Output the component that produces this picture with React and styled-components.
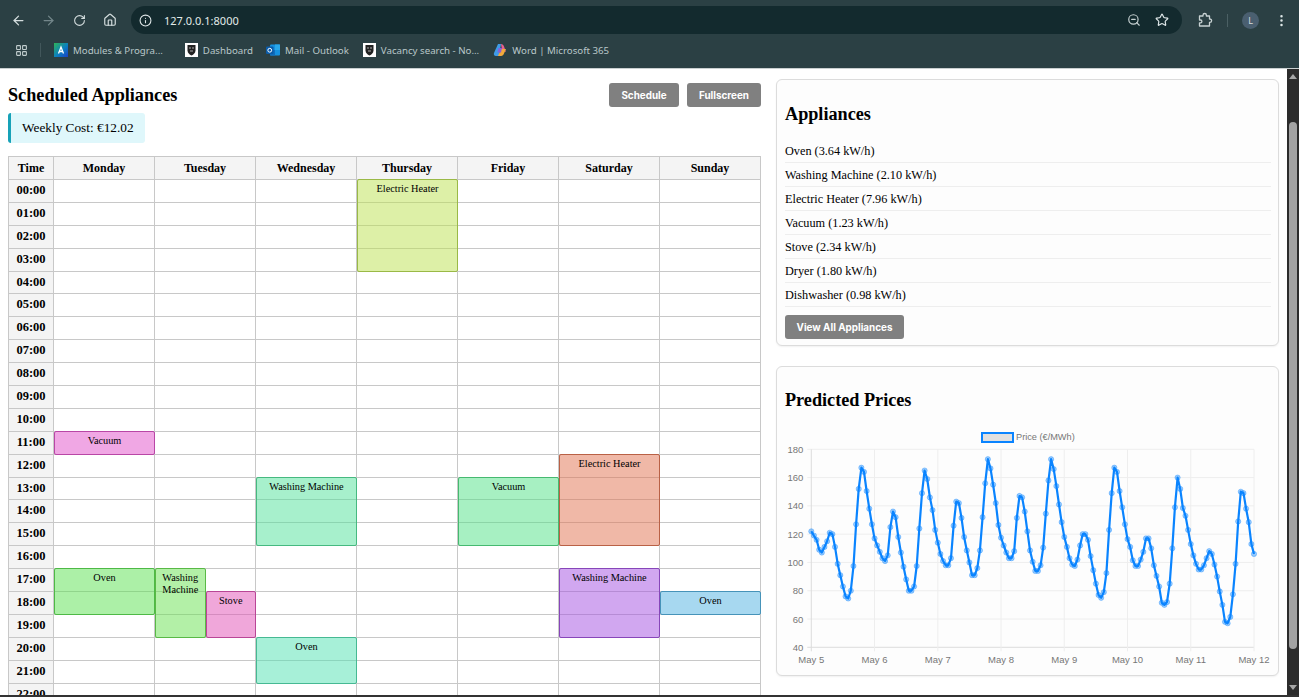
import React from 'react';
import styled, { createGlobalStyle } from 'styled-components';
import { ArrowLeft, ArrowRight, RotateCw, Home, Info, ZoomOut, Star, MoreVertical, LayoutGrid } from 'lucide-react';

const GlobalStyle = createGlobalStyle`
  html, body {
    margin: 0;
    padding: 0;
    height: 100%;
    overflow: hidden;
    background: #fff;
  }
  * {
    box-sizing: border-box;
  }
`;

const days = ['Monday', 'Tuesday', 'Wednesday', 'Thursday', 'Friday', 'Saturday', 'Sunday'];
const hours = Array.from({ length: 24 }, (_, i) => `${String(i).padStart(2, '0')}:00`);

// day is 0-based from Monday, half: 1 = left half of the column, 2 = right half
const events = [
  { name: 'Electric Heater', day: 3, start: 0, span: 4, hue: 76 },
  { name: 'Vacuum', day: 0, start: 11, span: 1, hue: 310 },
  { name: 'Electric Heater', day: 5, start: 12, span: 4, hue: 14 },
  { name: 'Washing Machine', day: 2, start: 13, span: 3, hue: 150 },
  { name: 'Vacuum', day: 4, start: 13, span: 3, hue: 142 },
  { name: 'Oven', day: 0, start: 17, span: 2, hue: 116 },
  { name: 'Washing Machine', day: 1, start: 17, span: 3, hue: 110, half: 1 },
  { name: 'Stove', day: 1, start: 18, span: 2, hue: 318, half: 2 },
  { name: 'Oven', day: 2, start: 20, span: 2, hue: 160 },
  { name: 'Washing Machine', day: 5, start: 17, span: 3, hue: 274 },
  { name: 'Oven', day: 6, start: 18, span: 1, hue: 200 },
];

const appliances = [
  'Oven (3.64 kW/h)',
  'Washing Machine (2.10 kW/h)',
  'Electric Heater (7.96 kW/h)',
  'Vacuum (1.23 kW/h)',
  'Stove (2.34 kW/h)',
  'Dryer (1.80 kW/h)',
  'Dishwasher (0.98 kW/h)',
];

const prices = [
  122, 119, 116, 109, 107, 111, 115, 121, 120, 111, 99, 91, 83, 76, 74.5, 80, 97.5, 127, 152, 167, 164, 150.5, 138, 127,
  117, 112, 107.5, 103, 101, 105, 125, 136, 132, 118, 107, 97, 88, 80, 80, 83, 97.5, 124, 149, 165, 159, 146, 137, 123,
  114, 106, 101, 98, 98, 103, 126, 143, 142, 131.5, 118, 108.5, 100, 91, 91, 96, 108.5, 132, 156, 173, 166.5, 155, 142, 126.5,
  117.5, 112, 107, 103, 103, 108, 131.5, 147, 146, 136, 122, 108.5, 100.5, 94, 94, 98, 110.5, 134.5, 158, 173, 166, 154, 141, 128.5,
  118, 111, 103, 98.5, 97.5, 102, 112, 120, 120, 116, 104.5, 94.5, 85, 77, 75, 79, 92.5, 123, 149, 167, 164, 150.5, 139, 127,
  116.5, 111, 101.5, 97.5, 97.5, 102, 107.5, 117, 117, 110, 98, 90.5, 83, 71.5, 70, 72, 85, 110, 139, 160, 152, 138.5, 133, 123,
  113, 105, 99, 95, 95, 98, 103, 108, 106, 98.5, 90, 79.5, 70, 58, 57, 61.5, 77.5, 99, 129, 150, 149, 138, 128.5, 113, 106,
];

const CHART = { left: 26.3, right: 469, top: 24.3, bottom: 222.3 };
const xAt = (hour) => CHART.left + (hour / 168) * (CHART.right - CHART.left);
const yAt = (value) => CHART.bottom - ((value - 40) / 140) * (CHART.bottom - CHART.top);

const yTicks = [40, 60, 80, 100, 120, 140, 160, 180];
const xTicks = ['May 5', 'May 6', 'May 7', 'May 8', 'May 9', 'May 10', 'May 11', 'May 12'];

const PriceChart = () => (
  <ChartSvg viewBox="0 0 487 252">
    <LegendBox x="197" y="8" width="31" height="9" />
    <LegendText x="231" y="15">Price (€/MWh)</LegendText>

    {yTicks.map((tick) => (
      <g key={tick}>
        <GridLine x1={CHART.left - 4} x2={CHART.right} y1={yAt(tick)} y2={yAt(tick)} $axis={tick === 40} />
        <TickText x={CHART.left - 8} y={yAt(tick) + 3.5} textAnchor="end">{tick}</TickText>
      </g>
    ))}
    {xTicks.map((tick, i) => (
      <g key={tick}>
        <GridLine x1={xAt(i * 24)} x2={xAt(i * 24)} y1={CHART.top} y2={CHART.bottom + 4} $axis={i === 0} />
        <TickText x={xAt(i * 24)} y={CHART.bottom + 16} textAnchor="middle">{tick}</TickText>
      </g>
    ))}

    <PriceLine points={prices.map((p, i) => `${xAt(i).toFixed(1)},${yAt(p).toFixed(1)}`).join(' ')} />
    {prices.map((p, i) => (
      <PricePoint key={i} cx={xAt(i)} cy={yAt(p)} r="2.6" />
    ))}
  </ChartSvg>
);

const ExtensionIcon = () => (
  <svg width="16" height="16" viewBox="0 0 16 16" fill="none" stroke="#c8d2d3" strokeWidth="1.300" strokeLinejoin="round">
    <path d="M2.500 4H6V3.200a1.700 1.700 0 0 1 3.400 0V4h3.100v3h.4a1.700 1.700 0 0 1 0 3.400h-.4V14h-10v-3.200h1a1.400 1.400 0 0 0 0-2.800h-1z" />
  </svg>
);

const ShieldIcon = () => (
  <svg width="13" height="14" viewBox="0 0 13 14">
    <rect width="13" height="14" fill="#fff" />
    <path d="M2.500 2h8v5.500c0 2.500-2 4-4 5-2-1-4-2.500-4-5z" fill="#222" />
    <path d="M4 5h2M7 5h2M5 8h3" stroke="#aaa" strokeWidth="1" />
  </svg>
);

const ModulesIcon = () => (
  <svg width="14" height="14" viewBox="0 0 14 14">
    <defs>
      <linearGradient id="modGrad" x1="0" y1="0" x2="1" y2="1">
        <stop offset="0" stopColor="#2fb457" />
        <stop offset="0.55" stopColor="#0b7fc0" />
        <stop offset="1" stopColor="#1a3fc4" />
      </linearGradient>
    </defs>
    <rect width="14" height="14" fill="url(#modGrad)" />
    <path d="M4.500 10.500 7 4l2.500 6.500M5.500 8.500h3" stroke="#fff" strokeWidth="1.300" fill="none" />
  </svg>
);

const OutlookIcon = () => (
  <svg width="14" height="14" viewBox="0 0 14 14">
    <rect x="4" y="1.500" width="10" height="11" rx="1" fill="#1490df" />
    <rect x="9" y="1.500" width="5" height="5.500" fill="#28a8ea" />
    <rect x="4" y="7" width="5" height="5.500" fill="#0f6cbd" />
    <rect x="0" y="3.500" width="7.500" height="7.500" rx="1" fill="#0a5ba8" />
    <circle cx="3.750" cy="7.250" r="1.900" fill="none" stroke="#fff" strokeWidth="1" />
  </svg>
);

const CopilotIcon = () => (
  <svg width="14" height="14" viewBox="0 0 14 14">
    <path d="M5 1h3L6 13H3C1 13 .5 11.500 1 10z" fill="#3f9be8" />
    <path d="M8 1c1.500 0 2.500 1 3 2.500L13 9 9 7z" fill="#e8608f" />
    <path d="M5 13h3c1.500 0 2.500-1 3-2.500l2-4.500H8z" fill="#f2a93b" />
    <path d="M5.500 5 9 5 8 9.500H4.500z" fill="#8a5fd8" />
  </svg>
);

const bookmarks = [
  { label: 'Modules & Progra...', icon: <ModulesIcon />, gap: 22 },
  { label: 'Dashboard', icon: <ShieldIcon />, gap: 13 },
  { label: 'Mail - Outlook', icon: <OutlookIcon />, gap: 14 },
  { label: 'Vacancy search - No...', icon: <ShieldIcon />, gap: 14 },
  { label: 'Word | Microsoft 365', icon: <CopilotIcon />, gap: 0 },
];

const App = () => (
  <Page>
    <GlobalStyle />
    <BrowserChrome>
      <TopBar>
        <NavIcon><ArrowLeft size={15} /></NavIcon>
        <NavIcon $dim><ArrowRight size={15} /></NavIcon>
        <NavIcon><RotateCw size={13} /></NavIcon>
        <NavIcon><Home size={14} /></NavIcon>
        <AddressBar>
          <Info size={13} color="#dfe7e8" />
          <AddressText>127.0.0.1:8000</AddressText>
          <AddressActions>
            <ZoomOut size={14} color="#c8d2d3" />
            <Star size={14} color="#dfe7e8" />
          </AddressActions>
        </AddressBar>
        <ToolIcons>
          <ExtensionIcon />
          <ToolDivider />
          <Avatar>L</Avatar>
          <MoreVertical size={15} color="#dfe7e8" />
        </ToolIcons>
      </TopBar>
      <BookmarkBar>
        <LayoutGrid size={13} color="#c0cccd" />
        <BookmarkDivider />
        {bookmarks.map((b) => (
          <Bookmark key={b.label} $gap={b.gap}>
            {b.icon}
            <span>{b.label}</span>
          </Bookmark>
        ))}
      </BookmarkBar>
    </BrowserChrome>

    <Viewport>
      <Content>
        <ScheduleColumn>
          <ScheduleHeader>
            <div>
              <PageTitle>Scheduled Appliances</PageTitle>
              <CostBox>Weekly Cost: €12.02</CostBox>
            </div>
            <HeaderButtons>
              <GreyButton $width={70}>Schedule</GreyButton>
              <GreyButton $width={74}>Fullscreen</GreyButton>
            </HeaderButtons>
          </ScheduleHeader>

          <Calendar>
            <HeadCell $col={1} $row={1}>Time</HeadCell>
            {days.map((d, i) => (
              <HeadCell key={d} $col={i + 2} $row={1}>{d}</HeadCell>
            ))}
            {hours.map((h, r) => (
              <React.Fragment key={h}>
                <TimeCell $col={1} $row={r + 2}>{h}</TimeCell>
                {days.map((d, i) => (
                  <Cell key={d} $col={i + 2} $row={r + 2} />
                ))}
              </React.Fragment>
            ))}
            {events.map((e) => (
              <Event key={`${e.name}-${e.day}-${e.start}`} $day={e.day} $start={e.start} $span={e.span} $hue={e.hue} $half={e.half}>
                {e.name}
              </Event>
            ))}
          </Calendar>
        </ScheduleColumn>

        <SideColumn>
          <Panel $height={267}>
            <PanelTitle $top={22} $height={58.5}>Appliances</PanelTitle>
            <ApplianceList>
              {appliances.map((a) => (
                <ApplianceRow key={a}>{a}</ApplianceRow>
              ))}
            </ApplianceList>
            <GreyButton $width={119}>View All Appliances</GreyButton>
          </Panel>
          <Panel $height={310}>
            <PanelTitle $top={21} $height={59}>Predicted Prices</PanelTitle>
            <PriceChart />
          </Panel>
        </SideColumn>
      </Content>

      <Scrollbar>
        <ScrollArrow />
        <ScrollTrack>
          <ScrollThumb />
        </ScrollTrack>
        <ScrollArrow $down />
      </Scrollbar>
    </Viewport>
  </Page>
);

const Page = styled.div`
  height: 100vh;
  display: flex;
  flex-direction: column;
  overflow: hidden;
  border-bottom: 2px solid #333;
`;

const BrowserChrome = styled.header`
  flex: 0 0 69px;
  background: #2b4044;
  border-bottom: 1px solid #c9cfd0;
  font-family: "Noto Sans", "Open Sans", sans-serif;
`;

const TopBar = styled.div`
  height: 34px;
  padding: 6px 10px 0 3px;
  display: flex;
  align-items: center;
`;

const NavIcon = styled.span`
  flex: 0 0 30.5px;
  display: flex;
  justify-content: center;
  color: ${(p) => (p.$dim ? '#73868a' : '#d5dedf')};
`;

const AddressBar = styled.div`
  flex: 1;
  height: 28px;
  margin-left: 6px;
  padding: 0 13px 0 8px;
  border-radius: 14px;
  background: #132a2e;
  display: flex;
  align-items: center;
  gap: 12px;
`;

const AddressText = styled.span`
  flex: 1;
  font-size: 11px;
  color: #e2eaea;
`;

const AddressActions = styled.span`
  display: flex;
  align-items: center;
  gap: 14px;
`;

const ToolIcons = styled.div`
  flex: 0 0 106px;
  display: flex;
  align-items: center;
  padding-left: 15px;
`;

const ToolDivider = styled.span`
  width: 1px;
  height: 13px;
  margin: 0 14px 0 14px;
  background: #4b6064;
`;

const Avatar = styled.span`
  width: 17px;
  height: 17px;
  margin-right: 15px;
  border-radius: 50%;
  background: #4a5f70;
  color: #d5dedf;
  font-size: 9px;
  line-height: 17px;
  text-align: center;
`;

const BookmarkBar = styled.nav`
  height: 32px;
  padding: 0 0 0 15px;
  display: flex;
  align-items: center;
`;

const BookmarkDivider = styled.span`
  width: 1px;
  height: 14px;
  margin: 0 13px 0 12px;
  background: #42575b;
`;

const Bookmark = styled.span`
  display: flex;
  align-items: center;
  gap: 5px;
  margin-right: ${(p) => p.$gap}px;
  font-size: 9.700px;
  color: #b9c7c9;
  white-space: nowrap;
`;

const Viewport = styled.div`
  flex: 1;
  min-height: 0;
  display: flex;
  background: #fff;
`;

const Content = styled.main`
  flex: 1;
  min-width: 0;
  padding: 10px 8px 0 8px;
  display: grid;
  grid-template-columns: 753px 503px;
  column-gap: 15px;
  align-items: start;
  overflow: hidden;
  font-family: "Liberation Serif", "Times New Roman", serif;
  color: #000;
`;

const ScheduleColumn = styled.section`
  min-width: 0;
`;

const ScheduleHeader = styled.div`
  height: 77px;
  display: flex;
  justify-content: space-between;
  align-items: flex-start;
`;

const PageTitle = styled.h2`
  margin: 4px 0 0;
  height: 30px;
  font-size: 18.200px;
  line-height: 24px;
  font-weight: bold;
`;

const CostBox = styled.div`
  width: 137px;
  height: 30px;
  padding-left: 11px;
  border-left: 3px solid #17a2b8;
  border-radius: 3px;
  background: #dff7fb;
  font-size: 13.300px;
  line-height: 30px;
  white-space: nowrap;
`;

const HeaderButtons = styled.div`
  display: flex;
  gap: 8px;
  margin-top: 4px;
`;

const GreyButton = styled.button`
  display: block;
  width: ${(p) => p.$width}px;
  height: 24px;
  padding: 0;
  border: none;
  border-radius: 3px;
  background: #808080;
  color: #fff;
  font-family: Inter, "Liberation Sans", sans-serif;
  font-size: 9.900px;
  font-weight: 700;
`;

const Calendar = styled.div`
  display: grid;
  grid-template-columns: 45px repeat(7, 1fr);
  grid-template-rows: 23px repeat(24, 22.900px);
  border-top: 1px solid #c8c8c8;
  border-left: 1px solid #c8c8c8;
`;

const Cell = styled.div`
  grid-column: ${(p) => p.$col};
  grid-row: ${(p) => p.$row};
  border-right: 1px solid #c8c8c8;
  border-bottom: 1px solid #c8c8c8;
`;

const HeadCell = styled(Cell)`
  background: #f4f4f4;
  font-size: 12px;
  font-weight: bold;
  line-height: 22px;
  text-align: center;
`;

const TimeCell = styled(Cell)`
  background: #f4f4f4;
  font-size: 12.500px;
  font-weight: bold;
  line-height: 21px;
  text-align: center;
`;

const Event = styled.div`
  grid-column: ${(p) => p.$day + 2};
  grid-row: ${(p) => p.$start + 2} / span ${(p) => p.$span};
  z-index: 1;
  justify-self: ${(p) => (p.$half === 2 ? 'end' : 'stretch')};
  width: ${(p) => (p.$half ? '50%' : 'auto')};
  margin: -1px 0 0 0;
  padding: 3px 2px 0;
  border: 1px solid hsl(${(p) => p.$hue}, 45%, 50%);
  border-radius: 2px;
  background: hsla(${(p) => p.$hue}, 72%, 60%, 0.5);
  font-size: 10.300px;
  line-height: 12px;
  text-align: center;
`;

const SideColumn = styled.aside`
  display: flex;
  flex-direction: column;
  gap: 20px;
`;

const Panel = styled.section`
  height: ${(p) => p.$height}px;
  padding: 0 7px 0 8px;
  border: 1px solid #dcdcdc;
  border-radius: 6px;
  background: #fdfdfd;
  box-shadow: 0 1px 2px rgba(0, 0, 0, 0.06);
`;

const PanelTitle = styled.h3`
  margin: 0;
  padding-top: ${(p) => p.$top}px;
  height: ${(p) => p.$height}px;
  font-size: 18.200px;
  line-height: 24px;
  font-weight: bold;
`;

const ApplianceList = styled.ul`
  list-style: none;
  margin: 0 0 7.500px;
  padding: 0;
`;

const ApplianceRow = styled.li`
  height: 24.100px;
  border-bottom: 1px solid #eee;
  font-size: 12.250px;
  line-height: 24px;
`;

const ChartSvg = styled.svg`
  display: block;
  width: 487px;
  height: 252px;
  margin-top: -1px;
  font-family: "Liberation Sans", Arial, sans-serif;
`;

const LegendBox = styled.rect`
  fill: #e0e0e0;
  stroke: #0a84ff;
  stroke-width: 2;
`;

const LegendText = styled.text`
  font-size: 9.200px;
  fill: #777;
`;

const TickText = styled.text`
  font-size: 9.500px;
  fill: #777;
`;

const GridLine = styled.line`
  stroke: ${(p) => (p.$axis ? '#dcdcdc' : '#eeeeee')};
  stroke-width: 1;
`;

const PriceLine = styled.polyline`
  fill: none;
  stroke: #0a84ff;
  stroke-width: 2.200;
  stroke-linejoin: round;
`;

const PricePoint = styled.circle`
  fill: rgba(10, 132, 255, 0.4);
  stroke: rgba(10, 132, 255, 0.6);
  stroke-width: 0.600;
`;

const Scrollbar = styled.div`
  flex: 0 0 12px;
  background: #2c2c2c;
  display: flex;
  flex-direction: column;
  align-items: center;
`;

const ScrollArrow = styled.span`
  flex: 0 0 auto;
  margin: ${(p) => (p.$down ? '3px 0 5px' : '5px 0 3px')};
  border-left: 4px solid transparent;
  border-right: 4px solid transparent;
  ${(p) => (p.$down ? 'border-top: 5px solid #a6a6a6;' : 'border-bottom: 5px solid #a6a6a6;')}
`;

const ScrollTrack = styled.div`
  flex: 1;
  width: 100%;
  padding: 40px 2px 33px 2px;
  display: flex;
`;

const ScrollThumb = styled.div`
  flex: 1;
  border-radius: 4px;
  background: #a3a3a3;
`;

export default App;
